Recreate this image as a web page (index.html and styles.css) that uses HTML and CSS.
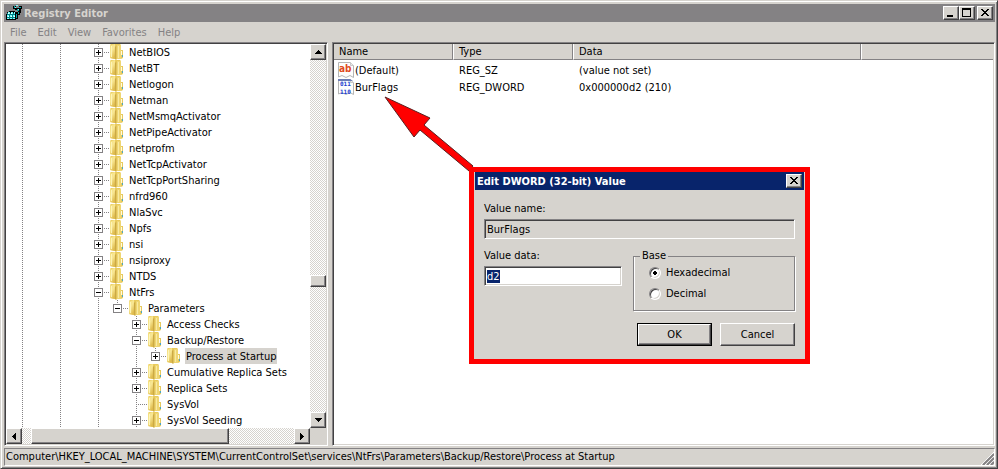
FILE: index.html
```html
<!DOCTYPE html>
<html lang="en">
<head>
    <meta charset="UTF-8">
    <meta name="viewport" content="width=device-width, initial-scale=1.0">
    <title>Registry Editor</title>
    <link rel="stylesheet" href="styles.css">
</head>
<body>
    <svg class="defs" aria-hidden="true">
        <defs>
            <linearGradient id="gold" x1="0" x2="0.6" y1="0" y2="1">
                <stop offset="0" stop-color="#f3dc78"/>
                <stop offset="0.5" stop-color="#f8e795"/>
                <stop offset="1" stop-color="#dfbb4c"/>
            </linearGradient>
            <symbol id="folder" viewBox="0 0 14 16">
                <path d="M1 0H10L11 1V6L13 7V14L11 15H5L0 14V1Z" fill="#e9cb5c"/>
                <path d="M7 1L11 1V15H7Z" fill="#efd673"/>
                <path d="M0 1L5 0V15L0 14Z" fill="url(#gold)"/>
                <path d="M1 2H2V13H1Z" fill="#fdf5b8"/>
                <path d="M5 3L6 2V16L5 15Z" fill="#cba945"/>
                <path d="M6 1L7 2V15L6 16Z" fill="#e0c25a"/>
                <path d="M8 2H9V14H8Z" fill="#f9eaa2"/>
                <path d="M11 6H13V14H11Z" fill="#e6c95f"/>
                <path d="M11 7H12V11H11Z" fill="#fffbe0"/>
                <path d="M12 11H13V13H12Z" fill="#4aa5c5"/>
            </symbol>
            <symbol id="page" viewBox="0 0 16 16">
                <path d="M0.5 0.5H12.5L15.5 3.5V15.5L12 13.5L8 15.5L4 13.5L0.5 15Z" fill="#fdfdfd" stroke="#b5b5b5"/>
                <path d="M12.5 0.5V3.5H15.5" fill="#e8e8e8" stroke="#c8c8c8"/>
            </symbol>
        </defs>
    </svg>

    <div class="window">
        <header class="titlebar">
            <svg class="app-icon" viewBox="0 0 16 16" shape-rendering="crispEdges" aria-hidden="true">
                <path d="M1 7H3V6H9V7H12V5H14V10H12V14H10V15H0V9H1Z" fill="#000"/>
                <path d="M1 8H9V14H1Z" fill="#008486"/>
                <path d="M2 7h2v2h-2zM5 7h2v2h-2zM8 7h1v2h-1zM1 10h2v2h-2zM4 10h2v2h-2zM7 10h2v2h-2zM1 13h2v1h-2zM4 13h2v1h-2zM7 13h2v1h-2z" fill="#7ff"/>
                <path d="M2 8h1v1h-1zM5 8h1v1h-1zM2 11h1v1h-1zM5 11h1v1h-1zM8 11h1v1h-1z" fill="#fff"/>
                <path d="M7 1h3v2h3v-2h3v3h-1v4h-3v-3h-3v-1h-2z" fill="#000"/>
                <path d="M8 1h1v2h-1zM11 4h2v2h-2zM13 2h2v1h-2zM12 7h1v2h-1zM10 9h1v4h-1z" fill="#00a5a5"/>
                <path d="M9 2h1v1h-1zM12 4h1v1h-1zM10 0h2v1h-2z" fill="#7ff"/>
            </svg>
            <h1>Registry Editor</h1>
            <div class="controls">
                <button class="raised" aria-label="Minimize"><svg width="12" height="10" shape-rendering="crispEdges"><path d="M2 7h6v2H2z"/></svg></button>
                <button class="raised" aria-label="Maximize"><svg width="12" height="10" shape-rendering="crispEdges"><path fill-rule="evenodd" d="M1 0h9v9H1zM2 2v6h7V2z"/></svg></button>
                <button class="raised close" aria-label="Close"><svg width="12" height="10" shape-rendering="crispEdges"><path d="M2 1h2v1h1v1h2v-1h1v-1h2v1h-1v1h-1v1h-1v1h1v1h1v1h1v1h-2v-1h-1v-1h-2v1h-1v1h-2v-1h1v-1h1v-1h1v-1h-1v-1h-1v-1h-1z"/></svg></button>
            </div>
        </header>

        <nav class="menubar">
            <button>File</button>
            <button>Edit</button>
            <button>View</button>
            <button>Favorites</button>
            <button>Help</button>
        </nav>

        <main class="panes">
            <section class="tree-pane sunken">
                <ul class="tree" id="tree"></ul>
                <div class="scrollbar vertical">
                    <button class="raised" aria-label="Scroll up"><svg width="7" height="4" shape-rendering="crispEdges"><path d="M3 0h1v1h1v1h1v1h1v1H0v-1h1v-1h1v-1h1z"/></svg></button>
                    <div class="before"></div>
                    <div class="thumb raised"></div>
                    <div class="after"></div>
                    <button class="raised" aria-label="Scroll down"><svg width="7" height="4" shape-rendering="crispEdges"><path d="M0 0h7v1h-1v1h-1v1h-1v1h-1v-1h-1v-1h-1v-1h-1z"/></svg></button>
                </div>
                <div class="scrollbar horizontal">
                    <button class="raised" aria-label="Scroll left"><svg width="4" height="7" shape-rendering="crispEdges"><path d="M4 0v7h-1v-1h-1v-1h-1v-1h-1v-1h1v-1h1v-1h1v-1z"/></svg></button>
                    <div class="before"></div>
                    <div class="thumb raised"></div>
                    <div class="after"></div>
                    <button class="raised" aria-label="Scroll right"><svg width="4" height="7" shape-rendering="crispEdges"><path d="M0 0h1v1h1v1h1v1h1v1h-1v1h-1v1h-1v1h-1z"/></svg></button>
                </div>
            </section>

            <section class="list-pane sunken">
                <table class="values">
                    <thead>
                        <tr>
                            <th class="name">Name</th>
                            <th class="type">Type</th>
                            <th class="data">Data</th>
                            <th class="rest"></th>
                        </tr>
                    </thead>
                    <tbody>
                        <tr>
                            <td><div class="entry">
                                <svg class="value-icon" viewBox="0 0 16 16" aria-hidden="true"><use href="#page"/><text class="glyph-ab" x="1" y="10">ab</text></svg>
                                <span>(Default)</span>
                            </div></td>
                            <td>REG_SZ</td>
                            <td>(value not set)</td>
                            <td></td>
                        </tr>
                        <tr>
                            <td><div class="entry">
                                <svg class="value-icon" viewBox="0 0 16 16" aria-hidden="true"><use href="#page"/><path d="M0 0H12L15 2H0Z" fill="#6b7cb5"/><text class="glyph-bin" x="2" y="7">011</text><text class="glyph-bin" x="2" y="15">110</text></svg>
                                <span>BurFlags</span>
                            </div></td>
                            <td>REG_DWORD</td>
                            <td>0x000000d2 (210)</td>
                            <td></td>
                        </tr>
                    </tbody>
                </table>
            </section>
        </main>

        <footer class="statusbar">
            <span>Computer\HKEY_LOCAL_MACHINE\SYSTEM\CurrentControlSet\services\NtFrs\Parameters\Backup/Restore\Process at Startup</span>
            <svg class="grip" width="13" height="13" aria-hidden="true">
                <path d="M0 13L13 0M4 13L13 4M8 13L13 8" stroke="#fff"/>
                <path d="M2 13L13 2M6 13L13 6M10 13L13 10" stroke="#848284" stroke-width="2"/>
            </svg>
        </footer>
    </div>

    <svg class="arrow" width="92" height="78" aria-hidden="true">
        <path d="M1 1L46 22L40 29L89 70L85 75L36 34L30 41Z" fill="#f00" stroke="#5a2020"/>
    </svg>

    <form class="dialog" onsubmit="return false">
        <header class="dialog-title">
            <h2>Edit DWORD (32-bit) Value</h2>
            <button type="button" class="raised close" aria-label="Close"><svg width="12" height="10" shape-rendering="crispEdges"><path d="M2 1h2v1h1v1h2v-1h1v-1h2v1h-1v1h-1v1h-1v1h1v1h1v1h1v1h-2v-1h-1v-1h-2v1h-1v1h-2v-1h1v-1h1v-1h1v-1h-1v-1h-1v-1h-1z"/></svg></button>
        </header>
        <div class="dialog-body">
            <div class="field">
                <label for="value-name">Value name:</label>
                <input id="value-name" class="sunken" type="text" value="BurFlags" readonly>
            </div>
            <div class="columns">
                <div class="field">
                    <label for="value-data">Value data:</label>
                    <input id="value-data" class="sunken" type="text" value="d2">
                </div>
                <fieldset>
                    <legend>Base</legend>
                    <label><input type="radio" name="base" checked> Hexadecimal</label>
                    <label><input type="radio" name="base"> Decimal</label>
                </fieldset>
            </div>
            <div class="actions">
                <button type="submit" class="ok"><span class="raised">OK</span></button>
                <button type="button" class="raised cancel">Cancel</button>
            </div>
        </div>
    </form>

    <script src="script.js"></script>
</body>
</html>
```
FILE: styles.css
```css
* {
    box-sizing: border-box;
}

body {
    margin: 0;
    font: 11px/16px "DejaVu Sans Condensed", Tahoma, sans-serif;
    color: #000;
    background-color: #d6d3ce;
}

h1, h2, ul, button, input, fieldset {
    margin: 0;
    padding: 0;
    font: inherit;
    color: inherit;
}

button {
    border: none;
    background-color: #d6d3ce;
}

svg {
    display: block;
    flex: none;
}

.defs {
    position: absolute;
    width: 0;
    height: 0;
}

/* 3D edges */
.raised {
    display: flex;
    justify-content: center;
    align-items: center;
    background-color: #d6d3ce;
    border: 1px solid;
    border-color: #fff #424142 #424142 #fff;
    box-shadow: inset -1px -1px #848284;
}

.sunken {
    padding: 1px;
    border: 1px solid;
    border-color: #848284 #fff #fff #848284;
    background-color: #fff;
    box-shadow: inset 1px 1px #424142, inset -1px -1px #d6d3ce;
}

/* Main window */
.window {
    display: flex;
    flex-direction: column;
    height: 100vh;
    padding: 2px 1px 2px 2px;
    border: 1px solid;
    border-color: #d6d3ce #424142 #424142 #d6d3ce;
    box-shadow: inset 1px 1px #fff, inset -1px -1px #848284;
}

.titlebar {
    display: flex;
    align-items: center;
    gap: 2px;
    height: 18px;
    margin: 1px 1px 0;
    padding: 0 2px;
    background-color: #848284;
    color: #d6d3ce;
}

.titlebar h1 {
    flex: 1;
    padding-top: 1px;
    font-weight: bold;
}

.app-icon {
    width: 16px;
    height: 16px;
}

.controls {
    display: flex;
    color: #000;
}

.titlebar .raised,
.dialog-title .raised {
    width: 16px;
    height: 14px;
}

.controls .close {
    margin-left: 2px;
}

.menubar {
    display: flex;
    gap: 11px;
    height: 20px;
    padding: 1px 7px 0;
}

.menubar button {
    color: #848284;
}

.panes {
    flex: 1;
    display: flex;
    gap: 4px;
    min-height: 0;
    padding: 0 1px;
}

/* Key tree */
.tree-pane {
    display: grid;
    grid-template-columns: 1fr 16px;
    grid-template-rows: 1fr 16px;
    flex: none;
    width: 324px;
    background-color: #d6d3ce;
}

.tree,
.tree ul {
    list-style: none;
    background-image: repeating-linear-gradient(#848284 0 1px, transparent 1px 2px);
    background-repeat: no-repeat;
    background-size: 1px 100%;
    background-position: 23px 0;
}

.tree {
    --guide: repeating-linear-gradient(#848284 0 1px, transparent 1px 2px);
    min-height: 0;
    overflow: hidden;
    padding-left: 88px;
    background-color: #fff;
    background-image: var(--guide), var(--guide), var(--guide);
    background-position: 16px 0, 54px 0, 92px 0;
}

.tree ul {
    padding-left: 19px;
}

.tree ul.single {
    background-size: 1px 8px;
}

.key {
    display: flex;
    align-items: center;
    height: 16px;
    white-space: nowrap;
}

.toggle,
.no-toggle {
    flex: none;
    width: 9px;
    height: 9px;
}

.toggle {
    border: 1px solid #848284;
    background: linear-gradient(#000, #000) center / 5px 1px no-repeat #fff;
}

.toggle.closed {
    background: linear-gradient(#000, #000) center / 5px 1px no-repeat,
        linear-gradient(#000, #000) center / 1px 5px no-repeat #fff;
}

.no-toggle {
    background: repeating-linear-gradient(90deg, #848284 0 1px, transparent 1px 2px) 4px 4px / 5px 1px no-repeat;
}

.branch {
    flex: none;
    width: 7px;
    height: 1px;
    background: repeating-linear-gradient(90deg, transparent 0 1px, #848284 1px 2px);
}

.folder {
    width: 14px;
    height: 16px;
    margin-right: 4px;
}

.key-name {
    padding: 2px 1px 0;
    line-height: 14px;
}

.key-name.selected {
    background-color: #d6d3ce;
}

/* Scrollbars */
.scrollbar {
    display: flex;
    min-height: 0;
    background: repeating-conic-gradient(#fff 0 25%, #d6d3ce 0 50%) 0 0 / 2px 2px;
}

.scrollbar button {
    flex: none;
    width: 16px;
    height: 16px;
}

.vertical {
    flex-direction: column;
}

.vertical .thumb {
    height: 12px;
}

.vertical .before {
    flex: 214;
}

.vertical .after {
    flex: 125;
}

.horizontal .before {
    flex: 9;
}

.horizontal .thumb {
    flex: 198;
}

.horizontal .after {
    flex: 65;
}

/* Value list */
.list-pane {
    flex: 1;
    min-width: 0;
}

.values {
    width: 100%;
    table-layout: fixed;
    border-collapse: separate;
    border-spacing: 0;
}

.values th {
    height: 16px;
    padding: 1px 5px 0;
    line-height: 14px;
    font-weight: normal;
    text-align: left;
    background-color: #d6d3ce;
    border-bottom: 1px solid #848284;
    border-right: 1px solid #848284;
    border-left: 1px solid #fff;
}

.values th.name {
    border-left: none;
}

.values th.rest {
    border-right: none;
}

.name {
    width: 119px;
}

.type {
    width: 120px;
}

.data {
    width: 288px;
}

.values td {
    padding: 0 0 0 6px;
    line-height: 17px;
    white-space: nowrap;
}

.values td:first-child {
    padding-left: 4px;
}

.values tbody tr:first-child td {
    padding-top: 2px;
}

.entry {
    display: flex;
    gap: 1px;
}

.value-icon {
    width: 16px;
    height: 16px;
}

.glyph-ab {
    font: bold 10px "DejaVu Sans Condensed", sans-serif;
    fill: #e04a20;
}

.glyph-bin {
    font: bold 6px "DejaVu Sans Mono", monospace;
    fill: #1c3fd0;
}

/* Status bar */
.statusbar {
    display: flex;
    justify-content: space-between;
    align-items: flex-end;
    height: 18px;
    margin: 2px 1px 0;
    padding-left: 1px;
    border: 1px solid;
    border-color: #848284 #fff #fff #848284;
    white-space: nowrap;
}

/* Edit dialog */
.arrow {
    position: absolute;
    left: 384px;
    top: 96px;
}

.dialog {
    position: absolute;
    left: 469px;
    top: 167px;
    width: 341px;
    border: 5px solid #f00;
    background-color: #d6d3ce;
}

.dialog-title {
    display: flex;
    justify-content: space-between;
    align-items: center;
    height: 18px;
    margin: 0 1px;
    padding: 0 2px;
    background-color: #08246b;
}

.dialog-title h2 {
    padding-top: 1px;
    font-weight: bold;
    color: #fff;
}

.dialog-body {
    padding: 11px 10px 13px;
}

.field label {
    display: block;
    margin-bottom: 2px;
}

.field input {
    display: block;
    width: 100%;
    height: 20px;
    padding: 0 2px;
    outline: none;
}

.field input[readonly] {
    background-color: #d6d3ce;
}

.field input::selection {
    background-color: #08246b;
    color: #fff;
}

.columns {
    display: flex;
    justify-content: space-between;
    margin-top: 9px;
}

.columns .field {
    width: 138px;
}

fieldset {
    width: 162px;
    min-width: 0;
    height: 63px;
    padding: 1px 15px 0;
    border: 1px solid #848284;
    box-shadow: 1px 1px #fff, inset 1px 0 #fff;
}

legend {
    margin-left: -9px;
    padding: 0 2px;
    background-color: #d6d3ce;
}

fieldset label {
    display: flex;
    align-items: center;
    gap: 5px;
    margin-bottom: 5px;
}

input[type="radio"] {
    appearance: none;
    width: 12px;
    height: 12px;
    border: 1px solid;
    border-color: #848284 #fff #fff #848284;
    border-radius: 50%;
    background-color: #fff;
    box-shadow: inset 1px 1px #424142, inset -1px -1px #d6d3ce;
}

input[type="radio"]:checked {
    background-image: radial-gradient(circle, #000 2px, transparent 2px);
}

.actions {
    display: flex;
    justify-content: flex-end;
    gap: 8px;
    margin-top: 12px;
}

.actions button {
    width: 75px;
    height: 23px;
}

.ok {
    border: 1px solid #000;
}

.ok .raised {
    height: 100%;
}
```
FILE: script.js
```javascript
const keys = [
    { name: 'NetBIOS', closed: true },
    { name: 'NetBT', closed: true },
    { name: 'Netlogon', closed: true },
    { name: 'Netman', closed: true },
    { name: 'NetMsmqActivator', closed: true },
    { name: 'NetPipeActivator', closed: true },
    { name: 'netprofm', closed: true },
    { name: 'NetTcpActivator', closed: true },
    { name: 'NetTcpPortSharing', closed: true },
    { name: 'nfrd960', closed: true },
    { name: 'NlaSvc', closed: true },
    { name: 'Npfs', closed: true },
    { name: 'nsi', closed: true },
    { name: 'nsiproxy', closed: true },
    { name: 'NTDS', closed: true },
    { name: 'NtFrs', children: [
        { name: 'Parameters', children: [
            { name: 'Access Checks', closed: true },
            { name: 'Backup/Restore', children: [
                { name: 'Process at Startup', closed: true, selected: true }
            ] },
            { name: 'Cumulative Replica Sets', closed: true },
            { name: 'Replica Sets', closed: true },
            { name: 'SysVol' },
            { name: 'SysVol Seeding', closed: true }
        ] }
    ] }
];

function renderKey(key) {
    let toggle = '<span class="no-toggle"></span>';
    if (key.closed) {
        toggle = '<button class="toggle closed" aria-label="Expand"></button>';
    } else if (key.children) {
        toggle = '<button class="toggle" aria-label="Collapse"></button>';
    }

    let html = '<li><div class="key">' + toggle +
        '<span class="branch"></span>' +
        '<svg class="folder" aria-hidden="true"><use href="#folder"/></svg>' +
        '<span class="key-name' + (key.selected ? ' selected' : '') + '">' + key.name + '</span></div>';

    if (key.children) {
        const single = key.children.length === 1 ? ' class="single"' : '';
        html += '<ul' + single + '>' + key.children.map(renderKey).join('') + '</ul>';
    }
    return html + '</li>';
}

document.getElementById('tree').innerHTML = keys.map(renderKey).join('');

const valueData = document.getElementById('value-data');
valueData.focus();
valueData.select();
```
